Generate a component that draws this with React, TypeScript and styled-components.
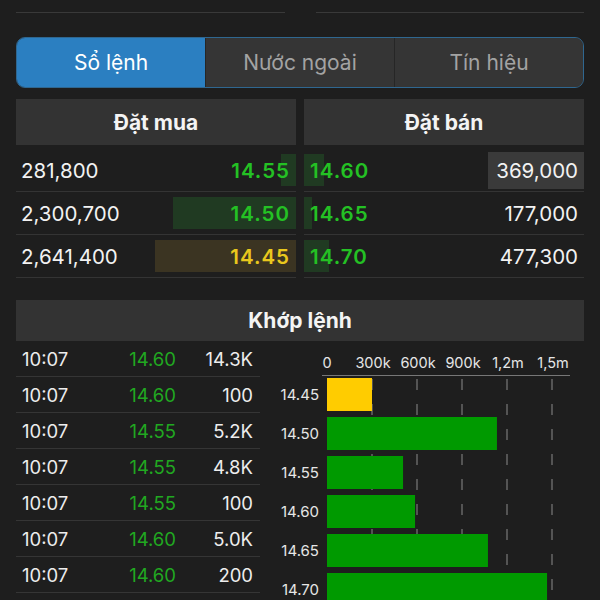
import React from 'react';
import styled, { createGlobalStyle } from 'styled-components';

const GlobalStyle = createGlobalStyle`
  body {
    margin: 0;
    background: #1e1e1e;
    font-family: Inter, 'Noto Sans', sans-serif;
    color: #f2f2f2;
  }
`;

type Side = 'green' | 'yellow';

const bids = [
  { qty: '281,800', price: '14.55', bar: 15, tone: 'green' as Side },
  { qty: '2,300,700', price: '14.50', bar: 123, tone: 'green' as Side },
  { qty: '2,641,400', price: '14.45', bar: 141, tone: 'yellow' as Side },
];

const asks = [
  { price: '14.60', qty: '369,000', bar: 20, marked: true },
  { price: '14.65', qty: '177,000', bar: 8, marked: false },
  { price: '14.70', qty: '477,300', bar: 25, marked: false },
];

const trades = [
  ['10:07', '14.60', '14.3K'],
  ['10:07', '14.60', '100'],
  ['10:07', '14.55', '5.2K'],
  ['10:07', '14.55', '4.8K'],
  ['10:07', '14.55', '100'],
  ['10:07', '14.60', '5.0K'],
  ['10:07', '14.60', '200'],
];

const volumes = [
  { price: '14.45', value: 300, color: '#ffcc00' },
  { price: '14.50', value: 1133, color: '#009a00' },
  { price: '14.55', value: 507, color: '#009a00' },
  { price: '14.60', value: 587, color: '#009a00' },
  { price: '14.65', value: 1073, color: '#009a00' },
  { price: '14.70', value: 1467, color: '#009a00' },
];

const ticks = ['0', '300k', '600k', '900k', '1,2m', '1,5m'];

const VolumeChart = () => {
  const x0 = 65;
  const scale = 45 / 300;
  return (
    <svg width={322} height={259} viewBox='0 0 322 259'>
      {ticks.slice(1).map((_, i) => (
        <line
          key={i}
          x1={x0 + (i + 1) * 45}
          x2={x0 + (i + 1) * 45}
          y1={35}
          y2={259}
          stroke='#8a8a8a'
          strokeWidth={1}
          strokeDasharray='11 14'
          strokeDashoffset={-3}
        />
      ))}
      <line x1={60} x2={308} y1={34.5} y2={34.5} stroke='#777' strokeWidth={1} />
      {ticks.map((t, i) => (
        <text
          key={t}
          x={i === 0 ? x0 : x0 + i * 45 + 1}
          y={27}
          fill='#e6e6e6'
          fontSize={14.5}
          textAnchor='middle'
          fontFamily='Inter, sans-serif'
        >
          {t}
        </text>
      ))}
      {volumes.map((v, i) => {
        const y = 37 + i * 39;
        return (
          <g key={v.price}>
            <rect x={x0} y={y} width={v.value * scale} height={33} fill={v.color} />
            <text
              x={57}
              y={y + 22}
              fill='#e6e6e6'
              fontSize={15}
              textAnchor='end'
              fontFamily='Inter, sans-serif'
            >
              {v.price}
            </text>
          </g>
        );
      })}
    </svg>
  );
};

const App = () => {
  return (
    <Page>
      <GlobalStyle />
      <TopRow>
        <TopCell>Tỷ lệ mua</TopCell>
        <TopCell $right>Tổng dư bán Khớp</TopCell>
      </TopRow>

      <Segmented>
        <Tab $active>Sổ lệnh</Tab>
        <Tab>Nước ngoài</Tab>
        <Tab>Tín hiệu</Tab>
      </Segmented>

      <Book>
        <div>
          <Header>Đặt mua</Header>
          {bids.map((b) => (
            <BookRow key={b.price}>
              <Qty>{b.qty}</Qty>
              <PriceCell>
                <Bar $tone={b.tone} $side='right' style={{ width: b.bar }} />
                <Price $tone={b.tone}>{b.price}</Price>
              </PriceCell>
            </BookRow>
          ))}
        </div>
        <div>
          <Header>Đặt bán</Header>
          {asks.map((a) => (
            <BookRow key={a.price}>
              <PriceCell $left>
                <Bar $tone='green' $side='left' style={{ width: a.bar }} />
                <Price $tone='green'>{a.price}</Price>
              </PriceCell>
              <Qty $marked={a.marked}>{a.qty}</Qty>
            </BookRow>
          ))}
        </div>
      </Book>

      <MatchHeader>Khớp lệnh</MatchHeader>
      <MatchBody>
        <TradeList>
          {trades.map(([time, price, vol], i) => (
            <TradeRow key={i}>
              <span>{time}</span>
              <TradePrice>{price}</TradePrice>
              <TradeVol>{vol}</TradeVol>
            </TradeRow>
          ))}
        </TradeList>
        <VolumeChart />
      </MatchBody>
    </Page>
  );
};

const Page = styled.div`
  width: 600px;
  height: 600px;
  overflow: hidden;
  padding: 0 16px;
  box-sizing: border-box;
  background: #1e1e1e;
`;

const TopRow = styled.div`
  display: grid;
  grid-template-columns: 269px 268px;
  justify-content: space-between;
  height: 13px;
`;

const TopCell = styled.div<{ $right?: boolean }>`
  height: 12px;
  overflow: hidden;
  border-bottom: 1px solid #393939;
  font-size: 18px;
  line-height: 22px;
  color: #f0f0f0;
  text-align: ${({ $right }) => ($right ? 'right' : 'left')};
  padding: 0 ${({ $right }) => ($right ? '40px' : '0')} 0 ${({ $right }) => ($right ? '0' : '8px')};

  &::before {
    content: '';
    display: block;
    margin-top: -22px;
  }
`;

const Segmented = styled.div`
  display: flex;
  margin-top: 24px;
  height: 51px;
  border: 1.5px solid #2f6790;
  border-radius: 9px;
  overflow: hidden;
  background: #353535;
  box-sizing: border-box;
`;

const Tab = styled.div<{ $active?: boolean }>`
  flex: 1;
  display: flex;
  align-items: center;
  justify-content: center;
  font-size: 21px;
  color: ${({ $active }) => ($active ? '#ffffff' : '#a3a3a3')};
  background: ${({ $active }) => ($active ? '#2b7fc1' : '#353535')};

  & + & {
    border-left: 1px solid ${({ $active }) => ($active ? '#2b7fc1' : '#262626')};
  }
`;

const Book = styled.div`
  display: grid;
  grid-template-columns: 1fr 1fr;
  gap: 8px;
  margin-top: 11px;
`;

const Header = styled.div`
  height: 46px;
  display: flex;
  align-items: center;
  justify-content: center;
  background: #333333;
  font-size: 21px;
  font-weight: 700;
  color: #f4f4f4;
  margin-bottom: 4px;
`;

const BookRow = styled.div`
  display: flex;
  align-items: center;
  justify-content: space-between;
  height: 42px;
  border-bottom: 1px solid #343434;
  font-size: 20.5px;
`;

const Qty = styled.span<{ $marked?: boolean }>`
  color: #f2f2f2;
  padding: 5px 6px 5px 5px;
  background: ${({ $marked }) => ($marked ? '#3a3a3a' : 'transparent')};
  ${({ $marked }) => $marked && 'padding: 6px 6px 6px 8px;'}
`;

const PriceCell = styled.div<{ $left?: boolean }>`
  position: relative;
  height: 100%;
  flex: 1;
  display: flex;
  align-items: center;
  justify-content: ${({ $left }) => ($left ? 'flex-start' : 'flex-end')};
  padding: ${({ $left }) => ($left ? '0 0 0 6px' : '0 6px 0 0')};
`;

const Bar = styled.div<{ $tone: Side; $side: 'left' | 'right' }>`
  position: absolute;
  top: 5px;
  bottom: 5px;
  ${({ $side }) => $side}: 0;
  background: ${({ $tone }) => ($tone === 'yellow' ? '#3b3422' : '#203a22')};
`;

const Price = styled.span<{ $tone: Side }>`
  position: relative;
  font-weight: 600;
  letter-spacing: 1px;
  color: ${({ $tone }) => ($tone === 'yellow' ? '#e9c81d' : '#24c124')};
`;

const MatchHeader = styled(Header)`
  height: 41px;
  margin-top: 22px;
  margin-bottom: 0;
`;

const MatchBody = styled.div`
  display: flex;
  gap: 2px;
`;

const TradeList = styled.div`
  width: 244px;
`;

const TradeRow = styled.div`
  display: grid;
  grid-template-columns: 84px 70px 77px;
  align-items: center;
  height: 35px;
  padding: 0 7px 0 6px;
  border-bottom: 1px solid #353535;
  font-size: 18.5px;
  color: #ededed;
`;

const TradePrice = styled.span`
  text-align: right;
  color: #21a821;
`;

const TradeVol = styled.span`
  text-align: right;
`;

export default App;
